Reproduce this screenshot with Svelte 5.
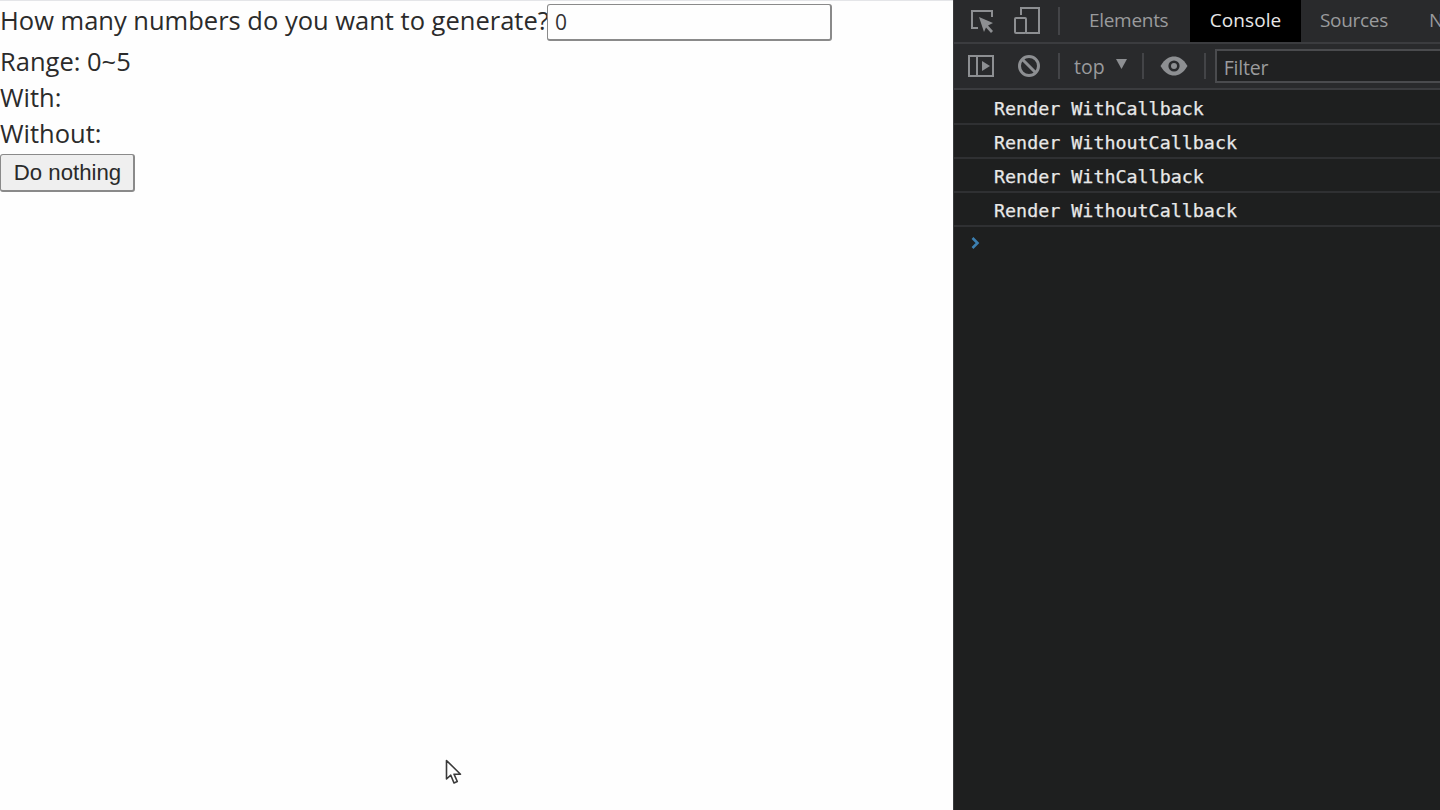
<script>
  const logs = ['Render WithCallback', 'Render WithoutCallback', 'Render WithCallback', 'Render WithoutCallback'];
</script>

<div class="page">
  <main class="content">
    <div class="line first">
      <span>How many numbers do you want to generate?</span><input class="num" value="0" />
    </div>
    <div class="line">Range: 0~5</div>
    <div class="line">With:</div>
    <div class="line">Without:</div>
    <button class="btn">Do nothing</button>
    <svg class="cursor" width="18" height="28" viewBox="0 0 18 28">
      <path d="M1.5 1.5 V20 L5.8 16.2 L9 24 L12.3 22.5 L9 15.2 H15.5 Z" fill="#fff" stroke="#3a3a3a" stroke-width="1.6" stroke-linejoin="round" />
    </svg>
  </main>

  <aside class="devtools">
    <div class="tabs">
      <svg class="ic first-ic" width="26" height="26" viewBox="0 0 26 26" fill="none" stroke="#8d8f92" stroke-width="2">
        <path d="M9 20 H3 V3 H23 V9" />
        <path d="M10 9 L24 15 L19 17.5 L24 23 L22 25 L17 19.5 L15 24 Z" fill="#8d8f92" stroke="none" />
      </svg>
      <svg class="ic device-ic" width="28" height="30" viewBox="0 0 28 30" fill="none" stroke="#8d8f92" stroke-width="2">
        <path d="M8 9 V2 H26 V27 H13" />
        <rect x="2" y="12" width="11" height="15" rx="1" />
      </svg>
      <span class="sep tab-sep"></span>
      <span class="tab elements">Elements</span>
      <span class="tab active">Console</span>
      <span class="tab sources">Sources</span>
      <span class="tab network">N</span>
    </div>

    <div class="toolbar">
      <svg class="ic sidebar-ic" width="26" height="24" viewBox="0 0 26 24" fill="none" stroke="#8d8f92" stroke-width="2">
        <rect x="1" y="2" width="24" height="20" />
        <path d="M9 2 V22" />
        <path d="M14 7 L22 12 L14 17 Z" fill="#8d8f92" stroke="none" />
      </svg>
      <svg class="ic clear-ic" width="24" height="24" viewBox="0 0 24 24" fill="none" stroke="#8d8f92" stroke-width="3">
        <circle cx="12" cy="12" r="9.5" />
        <path d="M5.5 5.5 L18.5 18.5" />
      </svg>
      <span class="sep bar-sep"></span>
      <span class="top">top</span>
      <svg class="caret" width="11" height="10" viewBox="0 0 11 10"><path d="M0 0 H11 L5.5 10 Z" fill="#8d8f92" /></svg>
      <span class="sep bar-sep caret-sep"></span>
      <svg class="ic eye-ic" width="28" height="20" viewBox="0 0 28 20">
        <path d="M0.5 10 C5 2.5 9.5 0.5 14 0.5 C18.5 0.5 23 2.5 27.5 10 C23 17.5 18.5 19.5 14 19.5 C9.5 19.5 5 17.5 0.5 10 Z" fill="#8d8f92" />
        <circle cx="14" cy="10" r="5.6" fill="#292a2c" />
        <circle cx="14" cy="10" r="3" fill="#8d8f92" />
      </svg>
      <span class="sep bar-sep eye-sep"></span>
      <div class="filter">Filter</div>
    </div>

    <div class="logs">
      {#each logs as log}
        <div class="log">{log}</div>
      {/each}
      <svg class="prompt" width="9" height="12" viewBox="0 0 9 12" fill="none" stroke="#3c7fb0" stroke-width="2.6">
        <path d="M1.5 1 L6.5 6 L1.5 11" />
      </svg>
    </div>
  </aside>
</div>

<style>
  :global(body) {
    margin: 0;
    overflow: hidden;
  }

  .page {
    display: flex;
    width: 1440px;
    height: 810px;
    overflow: hidden;
  }

  .content {
    position: relative;
    width: 953px;
    flex: none;
    box-sizing: border-box;
    background: #fefefe;
    border-top: 1px solid #e4e5e8;
    color: #2b2b2b;
    font-family: "Open Sans", sans-serif;
    font-size: 25.5px;
    line-height: 36px;
  }

  .line {
    height: 36px;
  }

  .first {
    display: flex;
    align-items: flex-end;
    height: 42px;
  }

  .first span {
    width: 547px;
    flex: none;
    margin-bottom: 5px;
    white-space: nowrap;
  }

  .num {
    width: 285px;
    height: 37px;
    box-sizing: border-box;
    margin: 0 0 2px;
    padding: 0 7px;
    border: 2px solid #8a8a8a;
    border-width: 1px 2px 2px 1px;
    border-radius: 3px;
    background: #fefefe;
    color: #333;
    font-family: "Open Sans", sans-serif;
    font-size: 21px;
    outline: none;
  }

  .btn {
    display: block;
    width: 135px;
    height: 38px;
    margin: 3px 0 0;
    padding: 1px 0 0 1px;
    border: 1px solid #8a8a8a;
    border-bottom-width: 2px;
    border-right-width: 2px;
    border-radius: 3px;
    background: #efefef;
    color: #2a2a2a;
    font-family: "Liberation Sans", sans-serif;
    font-size: 22.2px;
    line-height: 1;
  }

  .cursor {
    position: absolute;
    left: 445px;
    top: 758px;
  }

  .devtools {
    flex: 1;
    min-width: 0;
    display: flex;
    flex-direction: column;
    border-left: 1px solid #3a3b3d;
    background: #1e1f1f;
    font-family: "Open Sans", sans-serif;
    color: #9a9b9d;
  }

  .tabs {
    display: flex;
    align-items: center;
    height: 42px;
    flex: none;
    background: #292a2c;
    border-bottom: 2px solid #3b3c3f;
    font-size: 19px;
    white-space: nowrap;
    overflow: hidden;
  }

  .ic {
    flex: none;
  }

  .first-ic {
    margin-left: 15px;
  }

  .device-ic {
    margin-left: 18px;
  }

  .sep {
    flex: none;
    width: 2px;
    background: #434447;
  }

  .tab-sep {
    height: 28px;
    margin-left: 17px;
  }

  .tab {
    flex: none;
    height: 42px;
    line-height: 41px;
    box-sizing: border-box;
    letter-spacing: -0.3px;
  }

  .elements {
    width: 130px;
    padding-left: 29px;
  }

  .active {
    width: 111px;
    background: #000;
    color: #e8e8e8;
    text-align: center;
    letter-spacing: 0.1px;
  }

  .sources {
    width: 128px;
    padding-left: 19px;
  }

  .toolbar {
    display: flex;
    align-items: center;
    height: 46px;
    flex: none;
    background: #292a2c;
    border-bottom: 2px solid #3b3c3f;
    box-sizing: border-box;
    font-size: 19.5px;
  }

  .sidebar-ic {
    margin-left: 14px;
  }

  .clear-ic {
    margin-left: 23px;
  }

  .bar-sep {
    height: 26px;
    margin-left: 17px;
  }

  .top {
    margin-left: 14px;
    padding-top: 1px;
  }

  .caret {
    margin-left: 11px;
    margin-bottom: 4px;
  }

  .caret-sep {
    margin-left: 15px;
  }

  .eye-ic {
    margin-left: 16px;
  }

  .eye-sep {
    margin-left: 16px;
  }

  .filter {
    flex: 1;
    height: 34px;
    line-height: 33px;
    margin-left: 9px;
    padding-left: 7px;
    box-sizing: border-box;
    border: 2px solid #4a4b4e;
    border-right: none;
    background: #202122;
    letter-spacing: -0.2px;
  }

  .logs {
    flex: 1;
    padding-top: 1px;
  }

  .log {
    height: 34px;
    box-sizing: border-box;
    padding-left: 40px;
    border-bottom: 2px solid #2f3032;
    font-family: "DejaVu Sans Mono", monospace;
    font-size: 18.35px;
    line-height: 36px;
    color: #e8e8e8;
    -webkit-text-stroke: 0.25px #e8e8e8;
    white-space: pre;
  }

  .prompt {
    display: block;
    margin: 10px 0 0 17px;
  }
</style>
